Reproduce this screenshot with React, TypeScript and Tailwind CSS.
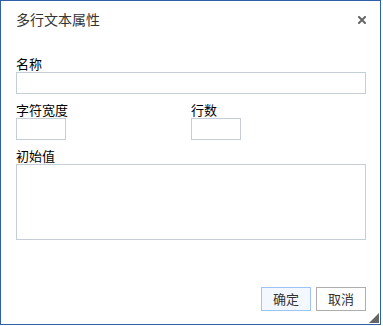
export default function App() {
  return (
    <div
      className="w-[383px] h-[326px] bg-white"
      style={{ fontFamily: '"Noto Sans CJK SC", "Liberation Sans", sans-serif' }}
    >
      <div className="relative w-[381px] h-[325px] border border-[#2f5fa7] bg-white flex flex-col">
        {/* Header */}
        <div className="flex items-center justify-between pl-[15px] pr-[14px] h-[36px]">
          <span className="text-[14px] text-[#333]">多行文本属性</span>
          <button className="w-[8px] h-[8px] mt-[2px]">
            <svg width="8" height="8" viewBox="0 0 8 8">
              <path d="M1 1 L7 7 M7 1 L1 7" stroke="#666" strokeWidth="2" strokeLinecap="square" />
            </svg>
          </button>
        </div>

        {/* Body */}
        <div className="flex flex-col px-[15px] pt-[19px]">
          <label className="text-[13px] leading-[15px] text-black">名称</label>
          <input className="mt-[1px] h-[22px] w-[350px] border border-[#c5cdd6] outline-none" />

          <div className="flex mt-[8px]">
            <div className="flex flex-col w-[175px]">
              <label className="text-[13px] leading-[15px] text-black">字符宽度</label>
              <input className="mt-[1px] h-[22px] w-[50px] border border-[#c5cdd6] outline-none" />
            </div>
            <div className="flex flex-col">
              <label className="text-[13px] leading-[15px] text-black">行数</label>
              <input className="mt-[1px] h-[22px] w-[50px] border border-[#c5cdd6] outline-none" />
            </div>
          </div>

          <label className="mt-[8px] text-[13px] leading-[15px] text-black">初始值</label>
          <textarea className="mt-[1px] h-[76px] w-[350px] border border-[#c5cdd6] outline-none resize-none" />
        </div>

        {/* Footer */}
        <div className="mt-auto flex justify-end gap-[5px] pr-[14px] pb-[13px]">
          <button className="w-[50px] h-[24px] border border-[#9cc4f4] bg-[#f3f8ff] text-[13px] text-[#333]">
            确定
          </button>
          <button className="w-[50px] h-[24px] border border-[#adadad] bg-white text-[13px] text-[#333]">
            取消
          </button>
        </div>

        {/* Resize grip */}
        <div className="absolute right-[1px] bottom-[1px] w-0 h-0 border-l-[10px] border-l-transparent border-b-[10px] border-b-[#666]" />
      </div>
    </div>
  );
}
